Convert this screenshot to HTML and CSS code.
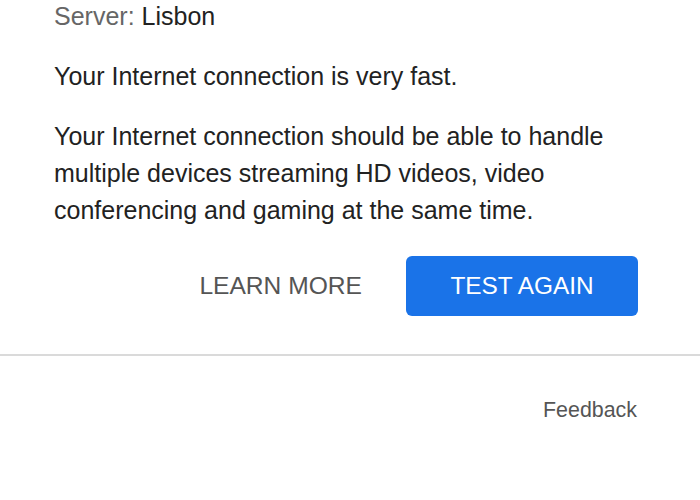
FILE: index.html
```html
<html><head>
    <title>Speed Test Result</title>
    <link rel="stylesheet" href="styles.css">
</head>
<body>
    <div class="result">
        <div class="server"><span class="label">Server:</span> Lisbon</div>
        <p class="summary">Your Internet connection is very fast.</p>
        <p class="detail">Your Internet connection should be able to handle multiple devices streaming HD videos, video conferencing and gaming at the same time.</p>
        <div class="actions">
            <button type="button" class="btn-text">LEARN MORE</button>
            <button type="button" class="btn-primary">TEST AGAIN</button>
        </div>
    </div>
    <div class="divider"></div>
    <div class="footer">
        <a class="feedback">Feedback</a>
    </div>
</body></html>
```

FILE: styles.css
```css
body {margin: 0; background: #fff; font-family: "Liberation Sans", Arial, sans-serif; color: #222;}
.result {padding: 0 62px 0 54px;}
.server {font-size: 25px; line-height: 36px; margin-top: -2px;}
.label {color: #666;}
.summary {font-size: 25px; line-height: 37px; margin: 24px 0 0 0;}
.detail {font-size: 25px; line-height: 37px; margin: 23px 0 0 0;}
.actions {display: flex; justify-content: flex-end; align-items: center; gap: 44px; margin-top: 27px;}
.btn-text {background: none; border: none; padding: 0; font-family: inherit; font-size: 24.6px; color: #555;}
.btn-primary {background: #1a73e8; color: #fff; border: none; border-radius: 6px; height: 60px; width: 232px; font-family: inherit; font-size: 24.4px;}
.divider {height: 2px; background: #dadada; margin-top: 38px;}
.footer {display: flex; justify-content: flex-end; padding: 0 63px; margin-top: 40px;}
.feedback {font-size: 21.4px; line-height: 28px; color: #555;}
```
